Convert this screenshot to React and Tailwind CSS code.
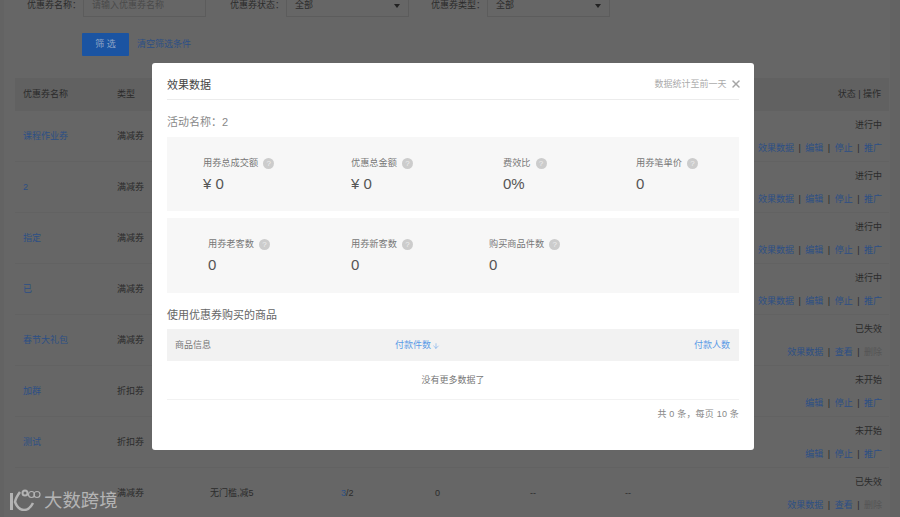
import React from "react";
import { X, ArrowDown } from "lucide-react";

const rows = [
  { name: "课程作业券", type: "满减券", status: "进行中", ops: ["效果数据", "编辑", "停止", "推广"] },
  { name: "2", type: "满减券", status: "进行中", ops: ["效果数据", "编辑", "停止", "推广"] },
  { name: "指定", type: "满减券", status: "进行中", ops: ["效果数据", "编辑", "停止", "推广"] },
  { name: "已", type: "满减券", status: "进行中", ops: ["效果数据", "编辑", "停止", "推广"] },
  { name: "春节大礼包", type: "满减券", status: "已失效", ops: ["效果数据", "查看", "删除"] },
  { name: "加群", type: "折扣券", status: "未开始", ops: ["编辑", "停止", "推广"] },
  { name: "测试", type: "折扣券", status: "未开始", ops: ["编辑", "停止", "推广"] },
  { name: "", type: "满减券", rule: "无门槛,减5", count: "3", total: "/2", used: "0", a: "--", b: "--", status: "已失效", ops: ["效果数据", "查看", "删除"] },
];

const Help = () => (
  <span className="ml-[5px] flex h-[11px] w-[11px] items-center justify-center rounded-full bg-[#cccccc] text-[8px] leading-none text-[#eeeeee]">
    ?
  </span>
);

const Stat = ({ label, value }) => (
  <div>
    <div className="flex h-[11px] items-center text-[9.2px] text-[#777]">
      {label}
      <Help />
    </div>
    <div className="mt-[4px] text-[15px] leading-[22px] text-[#555]">{value}</div>
  </div>
);

const Logo = () => (
  <svg width="32" height="22" viewBox="0 0 32 22" fill="none" stroke="#b4b4b4">
    <path d="M2.500 4 V21" strokeWidth="3" />
    <path d="M11 3 C8 7 6.500 10 6 13 C8 18 11 21 15 21 C19 21 22 18 24 14" strokeWidth="2.500" />
    <circle cx="16" cy="4" r="2.500" strokeWidth="2" />
    <circle cx="22.500" cy="5.500" r="3" strokeWidth="1.200" />
    <circle cx="28" cy="5.500" r="3" strokeWidth="1.200" />
  </svg>
);

const Filter = ({ label, value, placeholder, select }) => (
  <div className="flex items-center">
    <span className="w-[66px] text-right text-[9px] text-[#2b2b2b]">{label}</span>
    <div className="ml-[2px] flex h-[22px] w-[123px] items-center justify-between border border-[#5c5c5c] px-[8px] text-[9px]">
      <span className={select ? "text-[#2b2b2b]" : "text-[#4a4a4a]"}>{placeholder || value}</span>
      {select && <span className="h-0 w-0 border-x-[3px] border-t-[4px] border-x-transparent border-t-[#222]" />}
    </div>
  </div>
);

export default function App() {
  return (
    <div
      className="relative h-[517px] w-[900px] overflow-hidden bg-[#636363] text-[#2b2b2b]"
      style={{ fontFamily: '"Liberation Sans", "Noto Sans CJK SC", sans-serif' }}
    >
      {/* page behind the dialog */}
      <div className="-mt-[5px] ml-[4px] mr-[10px] h-[522px] bg-[#666] pl-[11px] pr-[1px]">
        <div className="flex">
          <Filter label={"优惠券名称\uFF1A"} placeholder="请输入优惠券名称" />
          <div className="ml-[12px]">
            <Filter label={"优惠券状态\uFF1A"} value="全部" select />
          </div>
          <div className="ml-[10px]">
            <Filter label={"优惠券类型\uFF1A"} value="全部" select />
          </div>
        </div>
        <div className="ml-[67px] mt-[16px] flex items-center">
          <button className="h-[23px] w-[47px] rounded-[1px] bg-[#1b54a2] text-[9px] text-[#8fa6c6]">筛 选</button>
          <span className="ml-[8px] text-[9px] text-[#2c4f85]">清空筛选条件</span>
        </div>

        <div className="mt-[22px] flex h-[33px] items-center bg-[#616161] px-[8px] pt-[1px] text-[9px]">
          <span className="w-[94px]">优惠券名称</span>
          <span>类型</span>
          <span className="ml-auto">状态 | 操作</span>
        </div>

        {rows.map((r, i) => (
          <div key={i} className="flex h-[51px] items-center border-b border-[#626262] pl-[8px] pr-[7px] pt-[2px] text-[9px]">
            <span className="w-[94px] text-[#2c4f85]">{r.name}</span>
            <span className="w-[93px]">{r.type}</span>
            <span className="w-[131px]">{r.rule}</span>
            <span className="w-[94px]">
              <span className="text-[#2c4f85]">{r.count}</span>
              {r.total}
            </span>
            <span className="w-[95px]">{r.used}</span>
            <span className="w-[95px]">{r.a}</span>
            <span>{r.b}</span>
            <div className="ml-auto flex flex-col items-end">
              <span>{r.status}</span>
              <div className="mt-[9px] flex items-center">
                {r.ops.map((op, j) => (
                  <React.Fragment key={op}>
                    {j > 0 && <span className="mx-[4.5px]">|</span>}
                    <span className={op === "删除" ? "text-[#555]" : "text-[#2c4f85]"}>{op}</span>
                  </React.Fragment>
                ))}
              </div>
            </div>
          </div>
        ))}
      </div>

      {/* dialog */}
      <div className="absolute left-[152px] top-[63px] h-[387px] w-[602px] rounded-[3px] bg-white px-[15px]">
        <div className="flex h-[37px] items-center border-b border-[#ececec] pt-[8px]">
          <span className="text-[11px] text-[#444]">效果数据</span>
          <span className="ml-auto text-[9px] text-[#aaa]">数据统计至前一天</span>
          <X size={12} strokeWidth={3} className="-mr-[2.5px] -mt-[2px] ml-[3px] text-[#a5a5a5]" />
        </div>
        <div className="mt-[14px] pt-[1px] text-[11px] leading-[14px] text-[#888]">{"活动名称\uFF1A2"}</div>

        <div className="mt-[8px] grid h-[74px] grid-cols-[148px_152px_133px_auto] content-start bg-[#f7f7f7] pl-[36px] pt-[21px]">
          <Stat label="用券总成交额" value="¥ 0" />
          <Stat label="优惠总金额" value="¥ 0" />
          <Stat label="费效比" value="0%" />
          <Stat label="用券笔单价" value="0" />
        </div>
        <div className="mt-[7px] grid h-[75px] grid-cols-[143px_138px_auto] content-start bg-[#f7f7f7] pl-[41px] pt-[21px]">
          <Stat label="用券老客数" value="0" />
          <Stat label="用券新客数" value="0" />
          <Stat label="购买商品件数" value="0" />
        </div>

        <div className="mt-[15px] text-[11px] leading-[14px] text-[#666]">使用优惠券购买的商品</div>
        <div className="mt-[7px] flex h-[32px] items-center bg-[#f2f2f2] pl-[8px] pr-[9px] pt-[1px] text-[9px]">
          <span className="w-[220px] text-[#777]">商品信息</span>
          <span className="flex items-center text-[#5b9be6]">
            付款件数
            <ArrowDown size={8} strokeWidth={1.500} className="ml-[1px]" />
          </span>
          <span className="ml-auto text-[#5b9be6]">付款人数</span>
        </div>
        <div className="flex h-[39px] items-center justify-center border-b border-[#f2f2f2] pt-[2px] text-[9px] text-[#777]">
          没有更多数据了
        </div>
        <div className="mt-[8px] text-right text-[9px] leading-[13px] tracking-[0.2px] text-[#888]">{"共 0 条\uFF0C每页 10 条"}</div>
      </div>

      {/* watermark */}
      <div className="absolute bottom-[6px] left-[9px] flex items-end text-[#b4b4b4]">
        <Logo />
        <span className="-mb-[2px] ml-[3px] text-[18.400px] leading-[24px]">大数跨境</span>
      </div>
    </div>
  );
}
